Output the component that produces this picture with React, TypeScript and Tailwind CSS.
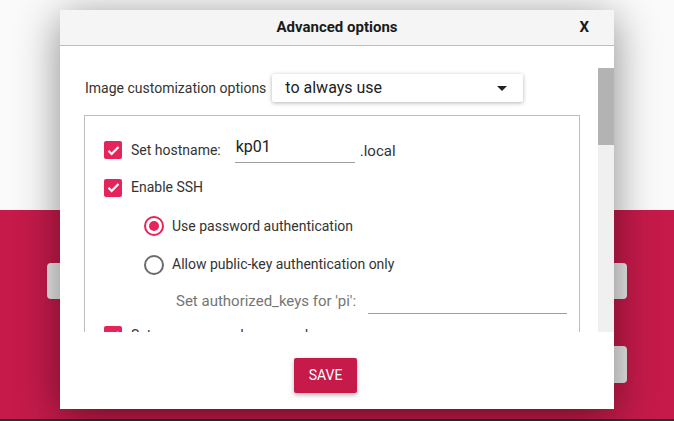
import React from "react";

const font = { fontFamily: "Roboto, 'Liberation Sans', sans-serif" };

const CheckBox = () => (
  <div className="w-[18px] h-[18px] rounded-[2px] bg-[#e5245b] flex items-center justify-center shrink-0">
    <svg viewBox="0 0 24 24" className="w-[15px] h-[15px]" fill="none" stroke="white" strokeWidth="3.6">
      <path d="M4 12.5l5 5L20 6.5" />
    </svg>
  </div>
);

const Radio = ({ on }: { on?: boolean }) => (
  <div
    className={`w-[20px] h-[20px] rounded-full border-[2.5px] flex items-center justify-center shrink-0 ${
      on ? "border-[#e5245b]" : "border-[#6b6b6b]"
    }`}
  >
    {on && <div className="w-[10px] h-[10px] rounded-full bg-[#e5245b]" />}
  </div>
);

export default function App() {
  return (
    <div className="relative w-full h-[421px] overflow-hidden flex flex-col" style={font}>
      {/* page behind the dialog */}
      <div className="h-[210px] bg-[#fafafa]" />
      <div className="flex-1 bg-[#c51a4a] flex flex-col gap-[47px] pt-[53px]">
        <div className="flex justify-between px-[47px]">
          <div className="w-[180px] h-[36px] rounded bg-[#e9e9e9]" />
          <div className="w-[180px] h-[36px] rounded bg-[#e9e9e9]" />
        </div>
        <div className="flex justify-end px-[47px]">
          <div className="w-[180px] h-[37px] rounded bg-[#e9e9e9]" />
        </div>
      </div>
      <div className="h-[2px] bg-[#2e2e2e]" />

      {/* dialog */}
      <div className="absolute left-[60px] top-[10px] w-[554px] h-[399px] bg-white flex flex-col shadow-[0_8px_40px_rgba(0,0,0,0.45)]">
        <div className="h-[36px] bg-[#f5f5f5] border-b border-[#bdbdbd] flex items-center relative shrink-0">
          <div className="flex-1 text-center text-[15px] font-bold text-[#1a1a1a]">Advanced options</div>
          <div className="absolute right-[25px] text-[15px] font-bold text-[#1a1a1a]">X</div>
        </div>

        <div className="h-[286px] flex shrink-0">
          <div className="flex-1 overflow-hidden pl-[24px] pt-[28px]">
            <div className="flex items-center h-[28px]">
              <span className="text-[14px] text-[#333] ml-[1px]">Image customization options</span>
              <div className="ml-[6px] w-[251px] h-[28px] rounded-[2px] bg-white shadow-[0_1px_4px_rgba(0,0,0,0.3)] flex items-center pl-[13px] pr-[16px]">
                <span className="flex-1 text-[16px] text-[#222]">to always use</span>
                <div className="w-0 h-0 border-l-[5px] border-r-[5px] border-t-[5px] border-l-transparent border-r-transparent border-t-[#222]" />
              </div>
            </div>

            <div className="mt-[13px] w-[496px] h-[300px] border border-[#bdbdbd] pt-[15px] pl-[19px] text-[14px] text-[#333]">
              <div className="h-[38px] flex items-center">
                <CheckBox />
                <span className="ml-[9px]">Set hostname:</span>
                <div className="ml-[14px] w-[120px] h-[26px] border-b border-[#9e9e9e] text-[16px] text-[#222] pl-[1px] leading-[20px]">
                  kp01
                </div>
                <span className="ml-[5px] mt-[2px] text-[15px]">.local</span>
              </div>
              <div className="h-[37px] flex items-center">
                <CheckBox />
                <span className="ml-[9px]">Enable SSH</span>
              </div>
              <div className="h-[40px] flex items-center pl-[40px]">
                <Radio on />
                <span className="ml-[8px]">Use password authentication</span>
              </div>
              <div className="h-[37px] flex items-center pl-[40px]">
                <Radio />
                <span className="ml-[8px]">Allow public-key authentication only</span>
              </div>
              <div className="h-[37px] flex items-center pl-[72px]">
                <span className="text-[#757575] text-[15px]">Set authorized_keys for 'pi':</span>
                <div className="ml-[12px] w-[199px] h-[22px] border-b border-[#9e9e9e] translate-y-[1px]" />
              </div>
              <div className="h-[30px] flex items-center">
                <CheckBox />
                <span className="ml-[9px]">Set username and password</span>
              </div>
            </div>
          </div>
          <div className="w-[16px] mt-[22px] bg-[#f0f0f0] flex flex-col">
            <div className="h-[77px] bg-[#b3b3b3]" />
          </div>
        </div>

        <div className="flex-1 bg-white flex items-start pt-[26px]">
          <div className="ml-[234px] w-[63px] h-[35px] rounded-[2px] bg-[#c51a4a] shadow-[0_2px_4px_rgba(0,0,0,0.3)] flex items-center justify-center text-white text-[14px]">
            SAVE
          </div>
        </div>
      </div>
    </div>
  );
}
